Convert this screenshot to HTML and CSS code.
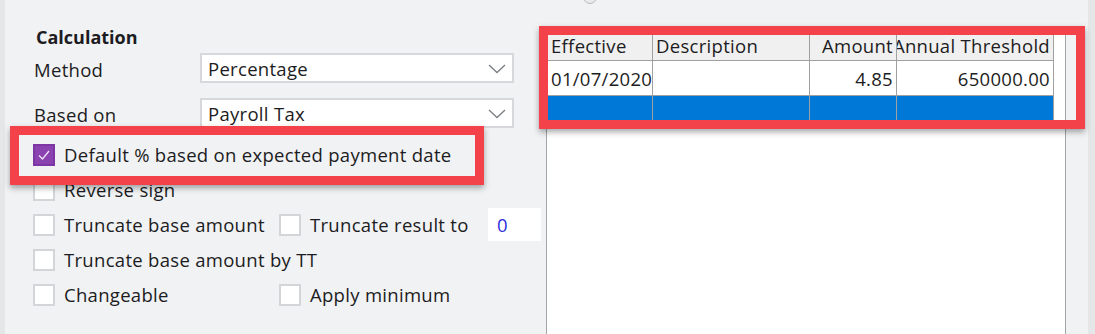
FILE: index.html
```html
<!DOCTYPE html>
<html lang="en">
<head>
<meta charset="utf-8">
<title>Calculation</title>
<link rel="stylesheet" href="styles.css">
</head>
<body>
<div class="screen">
  <div class="edge"></div>

  <section class="calc">
    <h2 class="title">Calculation</h2>

    <div class="field field-method">
      <span class="label">Method</span>
      <div class="select">
        <span class="select-value">Percentage</span>
        <svg class="chev" width="18" height="10" viewBox="0 0 18 10"><polyline points="1,1 9,8.5 17,1" fill="none" stroke="#7d8086" stroke-width="1.4"/></svg>
      </div>
    </div>

    <div class="field field-based">
      <span class="label">Based on</span>
      <div class="select">
        <span class="select-value">Payroll Tax</span>
        <svg class="chev" width="18" height="10" viewBox="0 0 18 10"><polyline points="1,1 9,8.5 17,1" fill="none" stroke="#7d8086" stroke-width="1.4"/></svg>
      </div>
    </div>

    <div class="checks">
      <div class="check-row">
        <label class="check">
          <span class="box box-on"><svg width="14" height="12" viewBox="0 0 14 12"><polyline points="2,6.5 5.5,10 12,2" fill="none" stroke="#efe6f5" stroke-width="1.3"/></svg></span>
          <span>Default % based on expected payment date</span>
        </label>
      </div>
      <div class="check-row">
        <label class="check"><span class="box"></span><span>Reverse sign</span></label>
      </div>
      <div class="check-row">
        <label class="check col-a"><span class="box"></span><span>Truncate base amount</span></label>
        <label class="check col-b"><span class="box"></span><span>Truncate result to</span></label>
        <span class="num">0</span>
      </div>
      <div class="check-row">
        <label class="check"><span class="box"></span><span>Truncate base amount by TT</span></label>
      </div>
      <div class="check-row">
        <label class="check col-a"><span class="box"></span><span>Changeable</span></label>
        <label class="check col-b"><span class="box"></span><span>Apply minimum</span></label>
      </div>
    </div>
  </section>

  <section class="rates">
    <span class="radio-peek"></span>
    <div class="panel">
      <div class="grid">
        <div class="cell head">Effective</div>
        <div class="cell head">Description</div>
        <div class="cell head right">Amount</div>
        <div class="cell head right clip"><span>Annual Threshold</span></div>

        <div class="cell row">01/07/2020</div>
        <div class="cell row"></div>
        <div class="cell row right">4.85</div>
        <div class="cell row right">650000.00</div>

        <div class="cell sel"></div>
        <div class="cell sel"></div>
        <div class="cell sel"></div>
        <div class="cell sel"></div>
      </div>
    </div>
  </section>

  <div class="edge edge-right"></div>
</div>

<div class="highlight hl-check"></div>
<div class="highlight hl-grid"></div>
</body>
</html>
```

FILE: styles.css
```css
* { box-sizing: border-box; }

html, body {
  margin: 0;
  padding: 0;
}

body {
  width: 1095px;
  height: 334px;
  overflow: hidden;
  background: #f1f2f4;
  font-family: "Open Sans", "Noto Sans", sans-serif;
  font-size: 18.5px;
  letter-spacing: 0.3px;
  color: #1c1c22;
  position: relative;
}

.screen {
  display: flex;
  height: 334px;
}

.edge {
  width: 5px;
  background: #e5e6e8;
  flex: none;
}

.edge-right {
  width: 7px;
}

/* ---------- left: calculation ---------- */
.calc {
  width: 541px;
  flex: none;
  padding: 27px 0 0 28px;
}

.title {
  margin: 0 0 0 3px;
  height: 20px;
  line-height: 20px;
  font-size: 18px;
  letter-spacing: 0;
  font-weight: 700;
}

.field {
  display: flex;
  align-items: center;
  height: 30px;
}

.field-method { margin-top: 6px; }
.field-based { margin-top: 15px; }

.label {
  width: 167px;
  padding-left: 1px;
  padding-top: 3px;
}

.select {
  width: 314px;
  height: 30px;
  background: #fff;
  border: 2px solid #d6d8db;
  display: flex;
  align-items: center;
  justify-content: space-between;
  padding: 0 6px 0 6px;
}

.chev { margin-top: 1px; }

.checks {
  margin-top: 9px;
}

.check-row {
  height: 35px;
  display: flex;
  align-items: center;
}

.check {
  display: flex;
  align-items: center;
  gap: 9px;
}

.col-a { width: 246px; }
.col-b { width: 209px; }

.box {
  width: 22px;
  height: 22px;
  background: #fff;
  border: 2px solid #d3d5d8;
  flex: none;
  display: flex;
  align-items: center;
  justify-content: center;
}

.box-on {
  background: #8a42b1;
  border-color: #7d37a5;
}

.num {
  width: 53px;
  height: 33px;
  background: #fff;
  color: #2f2fe0;
  padding: 4px 0 0 9px;
}

/* ---------- right: rates grid ---------- */
.rates {
  flex: 1;
  padding: 26px 22px 0 0;
  position: relative;
}

.radio-peek {
  position: absolute;
  left: 37px;
  top: -10px;
  width: 14px;
  height: 14px;
  border-radius: 50%;
  border: 1px solid #b8babd;
  background: #e9eaec;
}

.panel {
  height: 320px;
  background: #fff;
  border: 1px solid #a3a5a8;
  padding: 1px;
}

.grid {
  display: grid;
  grid-template-columns: 105px 157px 87px 157px;
  grid-template-rows: 33px 35px 26px;
}

.cell {
  border-right: 1px solid #a0a0a0;
  border-bottom: 1px solid #a0a0a0;
  padding: 0 3px;
  display: flex;
  align-items: center;
  white-space: nowrap;
  overflow: hidden;
}

.head {
  background: #f0f0f0;
  padding-top: 2px;
}

.row {
  background: #fff;
  padding-top: 1px;
}

.right { justify-content: flex-end; }

.sel {
  background: #0078d7;
  border-bottom: none;
}

/* ---------- red callouts ---------- */
.highlight {
  position: absolute;
  border: 9px solid #f3424a;
  box-shadow: 0 3px 6px rgba(0, 0, 0, 0.35);
}

.hl-check {
  left: 10px;
  top: 126px;
  width: 474px;
  height: 59px;
}

.hl-grid {
  left: 539px;
  top: 26px;
  width: 546px;
  height: 103px;
}
```
